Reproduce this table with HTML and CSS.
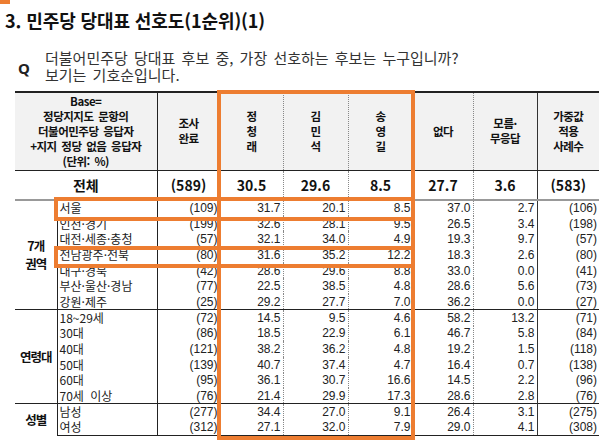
FILE: index.html
```html
<!DOCTYPE html>
<html lang="ko">

<head>
  <meta charset="UTF-8" />
  <title>민주당 당대표 선호도</title>
  <link rel="stylesheet" href="styles.css">
</head>

<body>
  <div class="page">
    <div class="corner-mark"></div>
    <h1 class="title">3. 민주당 당대표 선호도(1순위)(1)</h1>

    <div class="question">
      <span class="q-mark">Q</span>
      <p class="q-text">더불어민주당 당대표 후보 중, 가장 선호하는 후보는 누구입니까?<br>보기는 기호순입니다.</p>
    </div>

    <div class="table-wrap">
      <table class="result">
        <colgroup>
          <col style="width: 42px">
          <col style="width: 100px">
          <col style="width: 63px">
          <col style="width: 63px">
          <col style="width: 65px">
          <col style="width: 65px">
          <col style="width: 60px">
          <col style="width: 64px">
          <col style="width: 62px">
        </colgroup>
        <thead>
          <tr class="head-row">
            <th colspan="2">Base=<br>정당지지도 문항의<br>더불어민주당 응답자<br>+지지 정당 없음 응답자<br>(단위: %)</th>
            <th>조사<br>완료</th>
            <th>정<br>청<br>래</th>
            <th>김<br>민<br>석</th>
            <th>송<br>영<br>길</th>
            <th>없다</th>
            <th>모름·<br>무응답</th>
            <th>가중값<br>적용<br>사례수</th>
          </tr>
          <tr class="total-row">
            <th colspan="2">전체</th>
            <td>(589)</td>
            <td>30.5</td>
            <td>29.6</td>
            <td>8.5</td>
            <td>27.7</td>
            <td>3.6</td>
            <td>(583)</td>
          </tr>
        </thead>

        <tbody class="group first">
          <tr><th rowspan="7" class="group-name">7개<br>권역</th><td class="label">서울</td><td>(109)</td><td>31.7</td><td>20.1</td><td>8.5</td><td>37.0</td><td>2.7</td><td>(106)</td></tr>
          <tr><td class="label">인천·경기</td><td>(199)</td><td>32.6</td><td>28.1</td><td>9.5</td><td>26.5</td><td>3.4</td><td>(198)</td></tr>
          <tr><td class="label">대전·세종·충청</td><td>(57)</td><td>32.1</td><td>34.0</td><td>4.9</td><td>19.3</td><td>9.7</td><td>(57)</td></tr>
          <tr><td class="label">전남광주·전북</td><td>(80)</td><td>31.6</td><td>35.2</td><td>12.2</td><td>18.3</td><td>2.6</td><td>(80)</td></tr>
          <tr><td class="label">대구·경북</td><td>(42)</td><td>28.6</td><td>29.6</td><td>8.8</td><td>33.0</td><td>0.0</td><td>(41)</td></tr>
          <tr><td class="label">부산·울산·경남</td><td>(77)</td><td>22.5</td><td>38.5</td><td>4.8</td><td>28.6</td><td>5.6</td><td>(73)</td></tr>
          <tr><td class="label">강원·제주</td><td>(25)</td><td>29.2</td><td>27.7</td><td>7.0</td><td>36.2</td><td>0.0</td><td>(27)</td></tr>
        </tbody>

        <tbody class="group">
          <tr><th rowspan="6" class="group-name">연령대</th><td class="label">18~29세</td><td>(72)</td><td>14.5</td><td>9.5</td><td>4.6</td><td>58.2</td><td>13.2</td><td>(71)</td></tr>
          <tr><td class="label">30대</td><td>(86)</td><td>18.5</td><td>22.9</td><td>6.1</td><td>46.7</td><td>5.8</td><td>(84)</td></tr>
          <tr><td class="label">40대</td><td>(121)</td><td>38.2</td><td>36.2</td><td>4.8</td><td>19.2</td><td>1.5</td><td>(118)</td></tr>
          <tr><td class="label">50대</td><td>(139)</td><td>40.7</td><td>37.4</td><td>4.7</td><td>16.4</td><td>0.7</td><td>(138)</td></tr>
          <tr><td class="label">60대</td><td>(95)</td><td>36.1</td><td>30.7</td><td>16.6</td><td>14.5</td><td>2.2</td><td>(96)</td></tr>
          <tr><td class="label">70세 이상</td><td>(76)</td><td>21.4</td><td>29.9</td><td>17.3</td><td>28.6</td><td>2.8</td><td>(76)</td></tr>
        </tbody>

        <tbody class="group last">
          <tr><th rowspan="2" class="group-name">성별</th><td class="label">남성</td><td>(277)</td><td>34.4</td><td>27.0</td><td>9.1</td><td>26.4</td><td>3.1</td><td>(275)</td></tr>
          <tr><td class="label">여성</td><td>(312)</td><td>27.1</td><td>32.0</td><td>7.9</td><td>29.0</td><td>4.1</td><td>(308)</td></tr>
        </tbody>
      </table>

      <!-- 강조 표시 (주황 테두리) -->
      <div class="mark-box mark-col"></div>
      <div class="mark-box mark-seoul"></div>
      <div class="mark-box mark-honam"></div>
    </div>
  </div>
</body>

</html>
```

FILE: styles.css
```css
* {
  box-sizing: border-box;
}

body {
  margin: 0;
  background-color: #fff;
  color: #222;
  font-family: "Noto Sans CJK KR", "Noto Sans", sans-serif;
}

.page {
  width: 599px;
  height: 440px;
  overflow: hidden;
}

.corner-mark {
  width: 10px;
  height: 4px;
  background-color: #ed7d31;
}

.title {
  margin: 0;
  padding: 3px 0 0 5px;
  font-size: 18px;
  line-height: 26px;
  font-weight: 700;
  letter-spacing: -0.1px;
  color: #111;
}

.question {
  display: flex;
  align-items: center;
  margin-top: 16px;
}

.q-mark {
  width: 45px;
  padding-left: 18px;
  padding-top: 3px;
  font-family: "Noto Sans", sans-serif;
  font-size: 15px;
  font-weight: 700;
  color: #222;
}

.q-text {
  margin: 0;
  font-size: 15px;
  line-height: 17px;
  word-spacing: 2px;
  color: #333;
}

.table-wrap {
  position: relative;
  margin-top: 8px;
  padding-left: 15px;
}

.result {
  width: 584px;
  border-collapse: collapse;
  table-layout: fixed;
}

.result th,
.result td {
  padding: 0;
}

/* 머리글 */
.head-row th {
  height: 78px;
  background-color: #f2f2f2;
  border-top: 2px solid #222;
  border-bottom: 1px solid #222;
  font-size: 11.5px;
  line-height: 15px;
  font-weight: 700;
  letter-spacing: -0.5px;
  word-spacing: 2px;
  color: #111;
  text-align: center;
}

.total-row th,
.total-row td {
  height: 30px;
  border-bottom: 2px solid #999;
  font-size: 14px;
  font-weight: 700;
  text-align: center;
  color: #111;
}

/* 본문 */
.group td {
  height: 15.7px;
  font-family: "Liberation Sans", "Noto Sans CJK KR", sans-serif;
  font-size: 12px;
  line-height: 14px;
  text-align: right;
  padding-right: 2px;
  color: #222;
  white-space: nowrap;
}

.group td.label {
  font-family: "Noto Sans CJK KR", sans-serif;
  text-align: left;
  padding-left: 2px;
  border-left: 1px solid #222;
  word-spacing: 3px;
}

.group-name {
  font-size: 12.5px;
  line-height: 18px;
  font-weight: 700;
  letter-spacing: -1px;
  color: #111;
}

.group tr:first-child th,
.group tr:first-child td {
  border-top: 1px solid #222;
}

.group.first tr:first-child th,
.group.first tr:first-child td {
  border-top: 2px solid #999;
}

.group.last tr:last-child th,
.group.last tr:last-child td {
  border-bottom: 1px solid #222;
}

/* 세로 구분선: 마지막 7칸은 숫자 열 */
.result tr> :nth-last-child(7) {
  border-left: 1px solid #222;
}

.result tr> :nth-last-child(6),
.result tr> :nth-last-child(5),
.result tr> :nth-last-child(4),
.result tr> :nth-last-child(3),
.result tr> :nth-last-child(2) {
  border-left: 1px dotted #888;
}

.result tr> :nth-last-child(1) {
  border-left: 1px solid #333;
}

.mark-box {
  position: absolute;
  border: 4px solid #ed7d31;
}

.mark-col {
  left: 217px;
  top: -1px;
  width: 198px;
  height: 350px;
}

.mark-seoul {
  left: 54px;
  top: 106px;
  width: 361px;
  height: 24px;
}

.mark-honam {
  left: 54px;
  top: 155px;
  width: 361px;
  height: 22px;
}
```
